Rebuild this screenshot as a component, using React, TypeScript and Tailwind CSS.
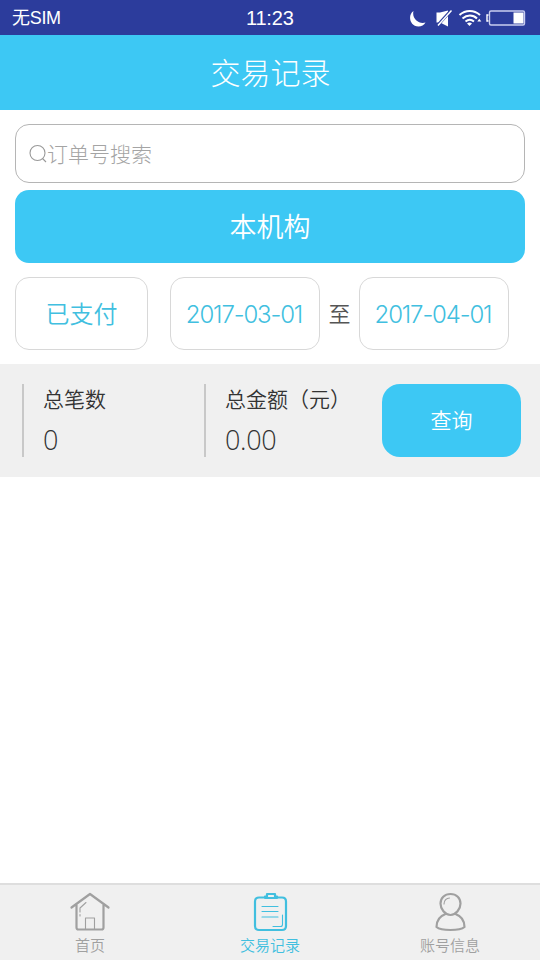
import React from "react";

const cjk = "font-['Noto_Sans_CJK_SC',sans-serif] font-[350]";
const cjkLight = "font-['Noto_Sans_CJK_SC',sans-serif] font-light";
const latin = "font-['Inter','Noto_Sans_CJK_SC',sans-serif] font-light";

function StatusBar() {
  return (
    <div className="flex h-[35px] shrink-0 items-center bg-[#2c3c9c] pl-3 pr-[14px] font-['Liberation_Sans','Noto_Sans_CJK_SC',sans-serif] text-white">
      <div className="w-[234px] text-[18px] leading-[34px] tracking-[-0.3px]">无SIM</div>
      <div className="text-[20px] leading-[34px] tracking-[-0.2px]">11:23</div>
      <svg className="ml-auto h-[34px] w-[116px]" viewBox="410 0 116 34" fill="none">
        <path d="M413.500 10C407.500 14 409.500 25.500 418.500 25.500C421.500 25.500 424 24 425.500 21.500C419 23.500 411.500 18 413.500 10Z" fill="#fff" />
        <path d="M436.500 11.500H440L448 9.500V25.500L440 21.500H436.500Z" fill="#fff" />
        <path d="M437 25L451 9.500" stroke="#2c3c9c" strokeWidth="3" />
        <path d="M438 24.500L451.500 9.500" stroke="#fff" strokeWidth="1.500" />
        <path d="M459.500 14C465.500 8.700 474 8.700 480 14M462.500 17.500C467 13.500 473 13.500 477 17.500M465.500 20.500C468.500 18 471 18 474 20.500" stroke="#fff" strokeWidth="2" />
        <path d="M467 22.500Q469.500 20.500 472 22.500L469.500 25Z" fill="#fff" />
        <path d="M477.300 20.500L479.300 17.800L481.300 20.500Z" fill="#fff" />
        <rect x="489.500" y="10" width="35" height="14" rx="1.500" stroke="#c9cdf0" strokeWidth="1.400" />
        <path d="M488.500 14H487V20H488.500" stroke="#fff" strokeWidth="1.400" />
        <rect x="513.500" y="11.500" width="10" height="11" fill="#fff" />
      </svg>
    </div>
  );
}

function DateBox({ value }: { value: string }) {
  return (
    <div className={`${latin} flex h-[73px] w-[150px] items-center justify-center rounded-[14px] border border-[#d8d8d8] pr-[2px] pt-[2px] text-[24px] tracking-[-1.15px] text-[#41bfe0]`}>
      {value}
    </div>
  );
}

function Total({ label, value }: { label: string; value: string }) {
  return (
    <div className="h-[73px] w-[182px] shrink-0 border-l-2 border-[#c8c8c8] pl-[19px] text-[#333]">
      <div className={`${cjk} h-[38px] whitespace-nowrap text-[21px] leading-[28px]`}>{label}</div>
      <div className="font-['Open_Sans','Noto_Sans',sans-serif] text-[27px] font-[350] leading-[36px] tracking-[-0.3px]">{value}</div>
    </div>
  );
}

function Tab({ label, active, children }: { label: string; active?: boolean; children: React.ReactNode }) {
  return (
    <div className={`flex flex-1 flex-col items-center pt-[5px] ${active ? "text-[#41bfdf]" : "text-[#a0a0a0]"}`}>
      <svg className="h-[44px] w-[44px]" viewBox="0 0 44 44" fill="none" stroke="currentColor" strokeWidth="2.200" strokeLinecap="round" strokeLinejoin="round">
        {children}
      </svg>
      <div className={`${cjk} text-[15px] leading-[21px]`}>{label}</div>
    </div>
  );
}

export default function App() {
  return (
    <div className="flex h-[960px] w-[540px] flex-col overflow-hidden bg-white">
      <StatusBar />
      <header className={`${cjkLight} flex h-[75px] shrink-0 items-center justify-center bg-[#3dc8f4] pb-[2px] pl-px text-[30px] text-white`}>交易记录</header>

      <main className="flex-1">
        <div className="px-[15px] pt-[14px]">
          <div className={`${cjkLight} flex h-[59px] items-center rounded-[14px] border border-[#b5b5b5] pl-[13px] text-[21px] text-[#a4a4a4]`}>
            <svg className="h-[20px] w-[18px] shrink-0" viewBox="0 0 18 20" fill="none" stroke="#999" strokeWidth="1.100">
              <circle cx="8.500" cy="9" r="7.500" />
              <path d="M13.500 14.500L17 18" />
            </svg>
            订单号搜索
          </div>
          <div className={`${cjk} mt-[7px] flex h-[73px] items-center justify-center rounded-[14px] bg-[#3dc8f4] text-[27px] text-white`}>本机构</div>
          <div className="mt-[14px] flex items-center">
            <div className={`${cjk} mr-[23px] flex h-[73px] w-[133px] items-center justify-center rounded-[14px] border border-[#d8d8d8] pb-[2px] text-[24px] text-[#41bfe0]`}>已支付</div>
            <div className="-ml-px flex items-center">
              <DateBox value="2017-03-01" />
              <div className={`${cjk} w-[39px] pb-[2px] text-center text-[22px] text-[#555]`}>至</div>
              <DateBox value="2017-04-01" />
            </div>
          </div>
        </div>

        <section className="mt-[14px] flex h-[113px] items-start bg-[#f0f0f0] pl-[22px] pt-[20px]">
          <Total label="总笔数" value="0" />
          <Total label="总金额（元）" value="0.00" />
          <div className={`${cjk} -ml-[4px] flex h-[73px] w-[139px] items-center justify-center rounded-[18px] bg-[#3dc8f4] pb-px text-[21px] text-white`}>查询</div>
        </section>
      </main>

      <nav className="flex h-[77px] shrink-0 border-t-2 border-[#dedede] bg-[#f0f0f0]">
        <Tab label="首页">
          <path d="M3.500 17.500L22 4L40.500 17.500M8.500 14.500V37.500Q8.500 39.500 10.500 39.500H33.500Q35.500 39.500 35.500 37.500V14.500" />
          <path d="M17.500 39V28H26.500V39M12 26V24.500M12 22V18L18 12.500" strokeWidth="1.100" />
        </Tab>
        <Tab label="交易记录" active>
          <path d="M15.500 7.500H11Q7 7.500 7 11.500V36Q7 40 11 40H34Q38 40 38 36V11.500Q38 7.500 34 7.500H30" />
          <path d="M17 8H29V6.500H27V4H19V6.500H17Z" />
          <path d="M14 16.500H30M14 21.500H30M14 27H30M34.500 25V34.500Q34.500 36.500 32.500 36.500H25" strokeWidth="1.100" />
        </Tab>
        <Tab label="账号信息">
          <path d="M22.500 4C16.500 4 12.500 8 12.500 13.500C12.500 19 17 25 22.500 25S32.500 19 32.500 13.500C32.500 8 28.500 4 22.500 4Z" />
          <path d="M17.500 24C12 26 8.500 31 8.500 37Q12 40 22.500 40T36.500 37C36.500 31 33 26 27.500 24" />
          <path d="M16 14C16 10.500 18.500 8 21.500 8" strokeWidth="1.100" />
        </Tab>
      </nav>
    </div>
  );
}
